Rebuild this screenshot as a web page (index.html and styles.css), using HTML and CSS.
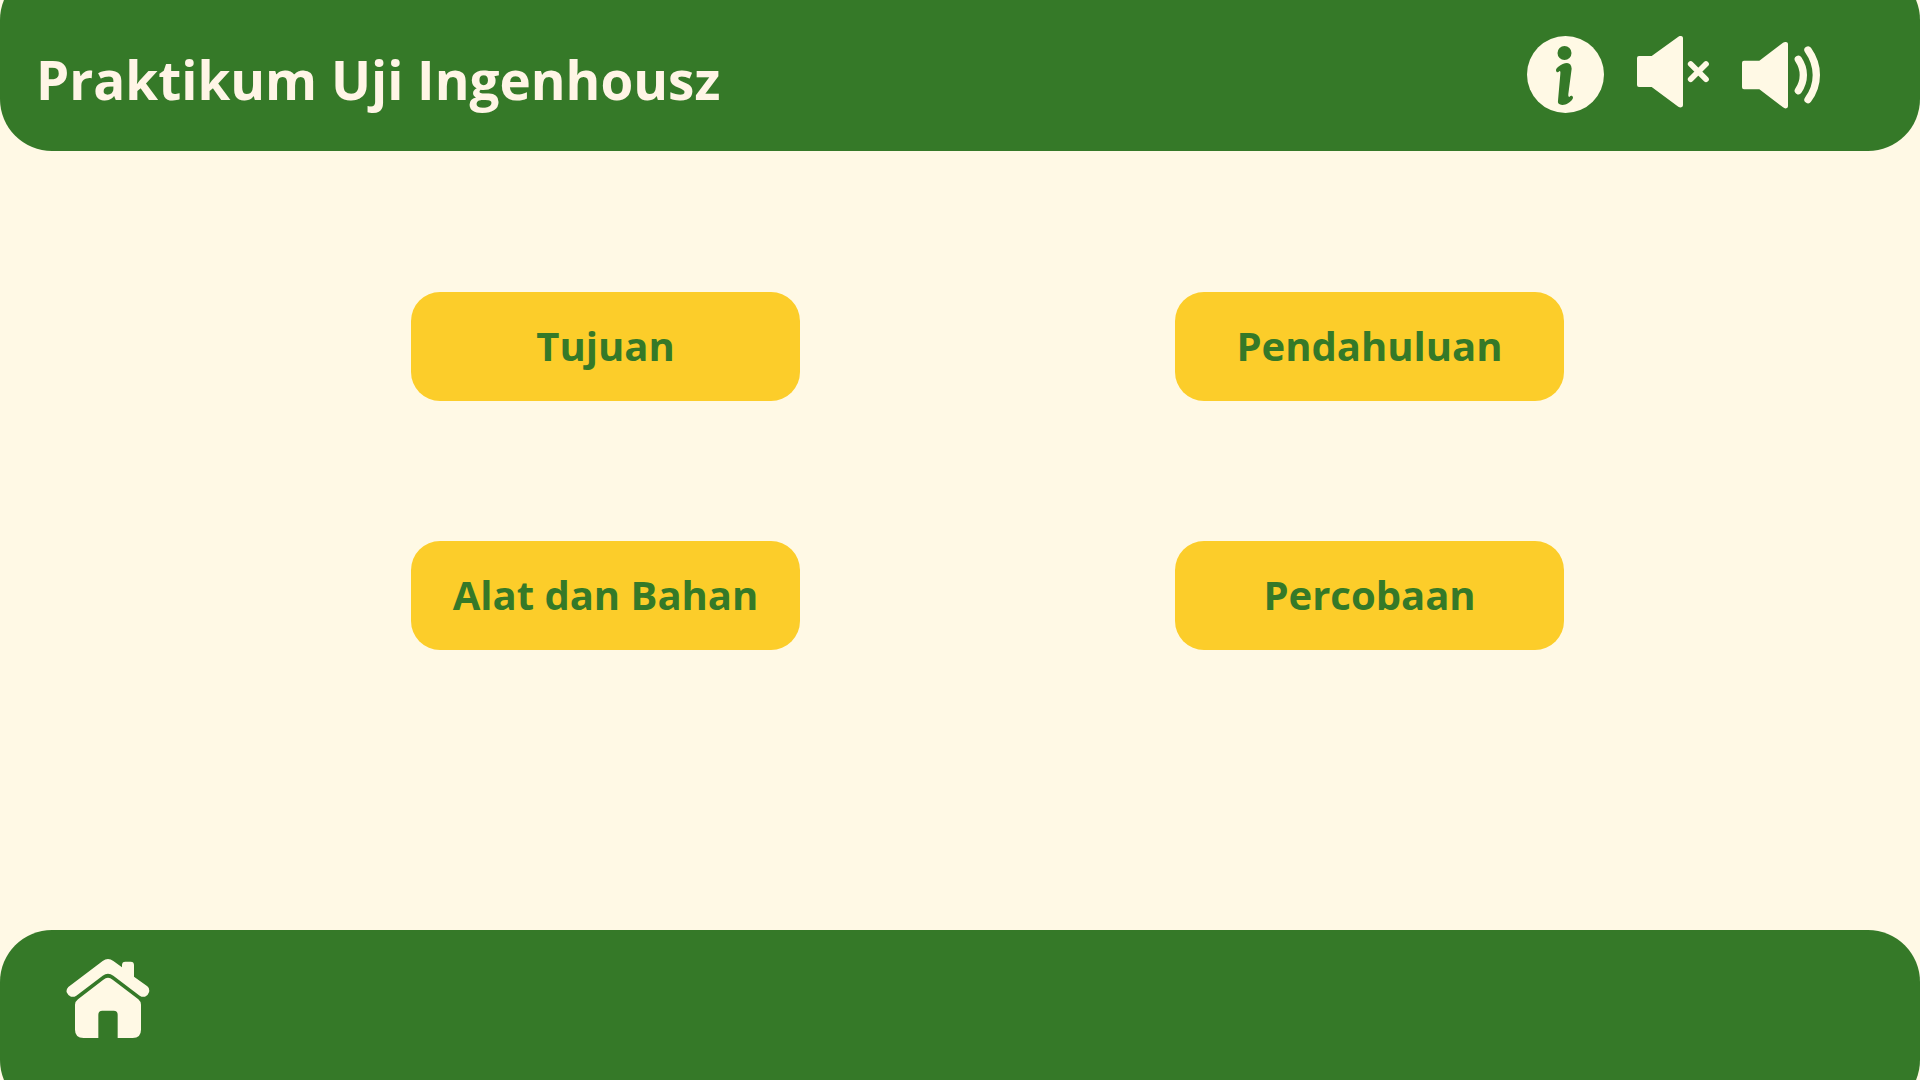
FILE: index.html
```html
<!DOCTYPE html>
<html lang="id">
<head>
  <meta charset="utf-8">
  <meta name="viewport" content="width=device-width, initial-scale=1">
  <title>Praktikum Uji Ingenhousz</title>
  <link rel="stylesheet" href="styles.css">
</head>
<body>
  <div class="page">
    <header class="bar header">
      <h1 class="title">Praktikum Uji Ingenhousz</h1>
      <div class="tools">
        <button class="icon-button" type="button" aria-label="Informasi">
          <svg width="77" height="77" viewBox="48 48 231 231" aria-hidden="true">
            <circle class="shape" cx="163.500" cy="163.500" r="115.500"/>
            <circle class="cutout" cx="160.500" cy="99" r="21"/>
            <path class="cutout" d="M137 156C133 151 135 146 141 141C151 133 160 129 168 129C177 130 181 135 182 146L172 222C171 230 175 233 177 229C179 226 186 227 186 233C186 238 179 245 171 250C163 255 153 256 146 253C142 251 140 247 141 242L148 162C149 154 147 152 145 154C142 157 139 158 137 156Z"/>
          </svg>
        </button>
        <button class="icon-button" type="button" aria-label="Matikan suara">
          <svg width="72" height="77" viewBox="48 48 216 231" aria-hidden="true">
            <path class="shape" d="M54 108H92L172 50Q178 46 183 49Q186 50 186 55V255Q186 260 183 261Q178 264 172 260L92 201H54Q48 201 48 195V114Q48 108 54 108Z"/>
            <path class="line line-x" d="M209 132L255 178M255 132L209 178"/>
          </svg>
        </button>
        <button class="icon-button" type="button" aria-label="Nyalakan suara">
          <svg width="78" height="77" viewBox="51 48 234 231" aria-hidden="true">
            <path class="shape" d="M57 122H103L174 68Q180 64 186 67Q189 69 189 73V258Q189 263 186 264Q180 267 174 262L103 208H57Q51 208 51 202V128Q51 122 57 122Z"/>
            <path class="line line-wave" d="M220 118Q235 140 235 165Q235 190 220 212M249 90Q274 125 274 165Q274 205 249 239"/>
          </svg>
        </button>
      </div>
    </header>

    <main class="menu">
      <button class="menu-button" type="button">Tujuan</button>
      <button class="menu-button" type="button">Pendahuluan</button>
      <button class="menu-button" type="button">Alat dan Bahan</button>
      <button class="menu-button" type="button">Percobaan</button>
    </main>

    <footer class="bar footer">
      <button class="icon-button" type="button" aria-label="Beranda">
        <svg width="84" height="79" viewBox="48 57 252 237" aria-hidden="true">
          <path class="shape" d="M55 141L158 63Q174 51 190 63L216 82V75Q216 65 226 65H242Q252 65 252 75V110L292 139Q300 146 297 157Q294 167 285 170Q277 172 269 167L190 107Q174 95 158 107L79 167Q71 172 63 170Q54 167 50 157Q48 148 55 141Z"/>
          <path class="shape" d="M84 178L160 119Q174 108 188 119L265 178Q273 185 273 194V269Q273 294 248 294H203V224Q203 212 191 212H157Q145 212 145 224V294H101Q75 294 75 269V194Q75 185 84 178Z"/>
        </svg>
      </button>
    </footer>
  </div>
</body>
</html>
```
FILE: styles.css
```css
:root {
  --green: #357928;
  --cream: #fff9e5;
  --title: #fff5e6;
  --yellow: #fccd2a;
  --bleed: 32px;
}

* {
  box-sizing: border-box;
}

body {
  margin: 0;
  background: var(--cream);
  font-family: "Open Sans", "Noto Sans", sans-serif;
}

.page {
  display: flex;
  flex-direction: column;
  min-height: 100vh;
  overflow: hidden;
}

/* Both bars run past the window edge, so their outer corners are only partly seen. */
.bar {
  display: flex;
  background: var(--green);
  border-radius: 52px;
}

.header {
  align-items: flex-end;
  justify-content: space-between;
  margin-top: calc(-1 * var(--bleed));
  padding: 68px 100px 38px 36px;
}

.title {
  margin: 0;
  color: var(--title);
  font-size: 53px;
  font-weight: 700;
  line-height: 66px;
}

.tools {
  display: flex;
  gap: 33px;
}

.icon-button {
  display: block;
  padding: 0;
  border: 0;
  background: none;
  cursor: pointer;
}

.icon-button svg {
  display: block;
}

.shape {
  fill: var(--cream);
}

.cutout {
  fill: var(--green);
}

.line {
  fill: none;
  stroke: var(--cream);
  stroke-linecap: round;
}

.line-x {
  stroke-width: 17px;
}

.line-wave {
  stroke-width: 22px;
}

.menu {
  display: grid;
  flex: 1;
  grid-template-columns: repeat(2, 389px);
  align-content: start;
  justify-content: center;
  gap: 140px 375px;
  padding: 141px 0 141px 55px;
}

.menu-button {
  height: 109px;
  padding: 0 0 2px;
  border: 0;
  border-radius: 29px;
  background: var(--yellow);
  color: var(--green);
  font-family: inherit;
  font-size: 40px;
  font-weight: 700;
  cursor: pointer;
}

.footer {
  margin-bottom: calc(-1 * var(--bleed));
  padding: 29px 66px 74px;
}
```
